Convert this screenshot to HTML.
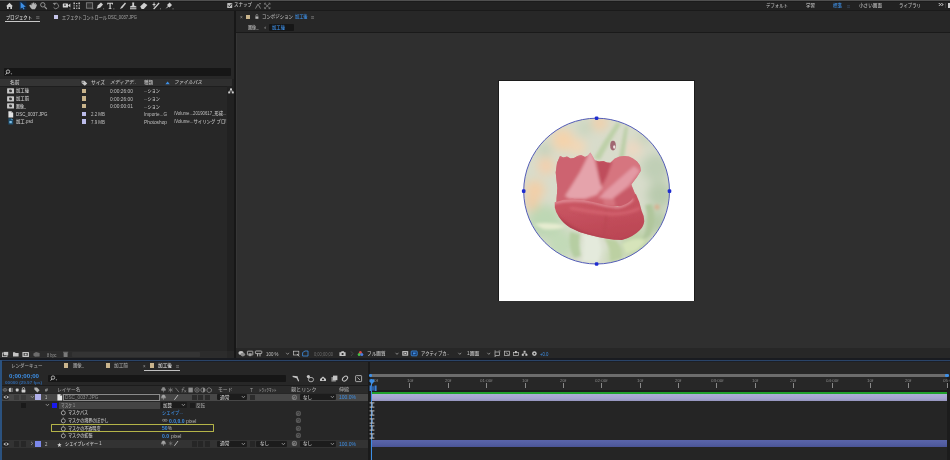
<!DOCTYPE html>
<html lang="ja">
<head>
<meta charset="utf-8">
<title>After Effects</title>
<style>
html,body{margin:0;padding:0;background:#262626;}
#app{position:relative;width:950px;height:460px;overflow:hidden;background:#262626;font-family:"Liberation Sans","Noto Sans CJK JP",sans-serif;}
#app div,#app svg,#app span{position:absolute;display:block;}
#app span{font-weight:500;white-space:nowrap;transform-origin:0 0;line-height:40px;height:40px;transform:scale(0.25);}
</style>
</head>
<body>
<div id="app">
<div style="left:0px;top:0px;width:950px;height:11px;background:#222222;"></div>
<div style="left:0px;top:0px;width:950px;height:1px;background:#505050;"></div>
<div style="left:0px;top:1px;width:950px;height:0.8px;background:#1c1c1c;"></div>
<div style="left:0px;top:10.4px;width:950px;height:1.1px;background:#1a1a1a;"></div>
<svg style="left:0px;top:0px;" width="240" height="11" viewBox="0 0 240 11">
<path d="M6 6.2 L9.5 2.8 L13 6.2 L12 6.2 L12 9 L10.3 9 L10.3 7 L8.7 7 L8.7 9 L7 9 L7 6.2 Z" fill="#cfcfcf"/>
<rect x="19" y="1.2" width="7.6" height="8.8" rx="0.8" fill="#15273d"/>
<path d="M20.6 2 L20.6 8.8 L22.3 7.4 L23.5 9.6 L24.6 9 L23.4 6.9 L25.8 6.7 Z" fill="#3d8fe6"/>
<path d="M29.2 5.4 L30.4 4.6 L31.4 5.6 L31.6 3.2 L32.5 2.8 L32.9 4.4 L33.2 2.4 L34.2 2.4 L34.4 4.4 L35 2.9 L35.9 3.2 L35.7 5 L36.5 4.2 L37 4.8 L36 7.6 L34.8 9.2 L32 9.2 L30.6 7.8 Z" fill="#b4b4b4"/>
<circle cx="42.8" cy="4.8" r="2.2" fill="none" stroke="#9c9c9c" stroke-width="0.9"/><path d="M44.5 6.6 L46.8 9" stroke="#9c9c9c" stroke-width="1.1"/>
<path d="M54.6 3.6 A2.7 2.7 0 1 1 53.6 7.4" fill="none" stroke="#8c8c8c" stroke-width="0.9"/><path d="M52.6 3 L55.6 2.8 L55 5.4 Z" fill="#8c8c8c"/>
<rect x="62.8" y="3.4" width="5.2" height="4.2" rx="0.6" fill="#d6d6d6"/><rect x="64" y="4.4" width="2" height="1.4" fill="#555"/><path d="M68 5.5 L70.4 3.6 L70.4 7.6 Z" fill="#d6d6d6"/><rect x="69.6" y="8.6" width="0.9" height="0.9" fill="#888"/>
<path d="M73.4 2.6 h1.6 v1.6 h-1.6 Z M78.4 2.6 h1.6 v1.6 h-1.6 Z M73.4 7.4 h1.6 v1.6 h-1.6 Z M78.4 7.4 h1.6 v1.6 h-1.6 Z M76 3 h1.4 v1 h-1.4 Z M76 7.8 h1.4 v1 h-1.4 Z M73.6 5.2 h1 v1.2 h-1 Z M78.8 5.2 h1 v1.2 h-1 Z M76 5.2 h1.4 v1.2 h-1.4 Z" fill="#b8b8b8"/>
<rect x="86.4" y="2.8" width="6.2" height="5.4" fill="#333" stroke="#7e7e7e" stroke-width="0.9"/><rect x="92.4" y="8.4" width="0.9" height="0.9" fill="#999"/>
<path d="M96.6 8.8 L98 5.2 L101 2.6 L103 4.4 L100.4 7.4 Z" fill="#cfcfcf"/><rect x="103.2" y="8.4" width="0.9" height="0.9" fill="#999"/>
<path d="M107.2 2.8 L113 2.8 L113 4.4 L112.2 4.4 L112 3.7 L110.7 3.7 L110.7 8.2 L111.6 8.4 L111.6 9 L108.6 9 L108.6 8.4 L109.5 8.2 L109.5 3.7 L108.2 3.7 L108 4.4 L107.2 4.4 Z" fill="#cfcfcf"/><rect x="113.4" y="8.4" width="0.9" height="0.9" fill="#999"/>
<path d="M120 9 L121 7 L125 2.6 L126 3.4 L122.4 8 Z" fill="#cfcfcf"/>
<path d="M132.2 2.6 L134.2 2.6 L134 5.4 L136.4 6.4 L136.4 7.6 L130 7.6 L130 6.4 L132.4 5.4 Z M130 8.2 L136.4 8.2 L136.4 9.2 L130 9.2 Z" fill="#cfcfcf"/>
<path d="M140.2 6.6 L144 2.8 L147.4 5 L143.8 9 L141.6 9 Z" fill="#cfcfcf"/>
<path d="M153 9 L158.6 2.6 L159.6 3.4 L154.4 9.2 Z M152.6 4 L155.4 4 L155.4 4.9 L152.6 4.9 Z M153.6 2.6 L154.5 2.6 L154.5 6.4 L153.6 6.4 Z" fill="#cfcfcf"/><rect x="160" y="8.4" width="0.9" height="0.9" fill="#999"/>
<path d="M165.4 8.8 L168 6 L167 5 L169.6 2.6 L172 5 L169.6 7.4 L168.8 6.8 Z" fill="#cfcfcf"/><rect x="172.6" y="8.4" width="0.9" height="0.9" fill="#999"/>
</svg>
<svg style="left:226px;top:2px;" width="50" height="9" viewBox="0 0 50 9">
<rect x="1.2" y="1" width="5" height="5" rx="0.6" fill="#bdbdbd"/><path d="M2.2 3.4 L3.4 4.8 L5.6 1.8" stroke="#222" stroke-width="0.9" fill="none"/>
<path d="M29.5 6.6 L32 2.2 L34.5 6.6" stroke="#9a9a9a" stroke-width="0.8" fill="none"/><rect x="33.4" y="1" width="1.2" height="1.2" fill="#9a9a9a"/>
<path d="M38.6 1.2 L40 1.2 M38.6 1.2 L38.6 2.6 M44 1.2 L42.6 1.2 M44 1.2 L44 2.6 M38.6 6.6 L40 6.6 M38.6 6.6 L38.6 5.2 M44 6.6 L42.6 6.6 M44 6.6 L44 5.2 M39.4 2 L43.2 5.8 M43.2 2 L39.4 5.8" stroke="#9a9a9a" stroke-width="0.7" fill="none"/>
</svg>
<span style="left:234px;top:-1.10px;font-size:20.0px;color:#c8c8c8;transform:scale(0.2250,0.25);">スナップ</span>
<span style="left:766px;top:-0.10px;font-size:20.0px;color:#b6b6b6;transform:scale(0.2200,0.25);">デフォルト</span>
<span style="left:806px;top:-0.10px;font-size:20.0px;color:#b6b6b6;transform:scale(0.2250,0.25);">学習</span>
<span style="left:833px;top:-0.10px;font-size:20.0px;color:#3d8fe6;transform:scale(0.2250,0.25);">標準</span>
<span style="left:847px;top:0.90px;font-size:20.0px;color:#3e5068;transform:scale(0.2999,0.25);">≡</span>
<span style="left:859px;top:-0.10px;font-size:20.0px;color:#b6b6b6;transform:scale(0.2300,0.25);">小さい画面</span>
<span style="left:899px;top:-0.10px;font-size:20.0px;color:#b6b6b6;transform:scale(0.2200,0.25);">ライブラリ</span>
<span style="left:937.5px;top:0.00px;font-size:28.0px;color:#c8c8c8;transform:scale(0.3852,0.25);">»</span>
<div style="left:948.2px;top:3.4px;width:1.8px;height:4.4px;background:#cfcfcf;"></div>
<div style="left:945.2px;top:3px;width:0.6px;height:5.0px;background:#3a3a3a;"></div>
<div style="left:0px;top:11.4px;width:234px;height:347.1px;background:#272727;"></div>
<div style="left:234px;top:11px;width:2.4px;height:347.5px;background:#171717;"></div>
<span style="left:6px;top:12.20px;font-size:20.0px;color:#dedede;transform:scale(0.2167,0.25);">プロジェクト</span>
<span style="left:35.5px;top:12.20px;font-size:20.0px;color:#8a8a8a;transform:scale(0.3427,0.25);">≡</span>
<div style="left:5px;top:20.7px;width:35px;height:1.1px;background:#c8c8c8;"></div>
<div style="left:54px;top:14.6px;width:4.2px;height:4.4px;background:#c4c4e8;"></div>
<span style="left:62px;top:12.20px;font-size:20.0px;color:#a8a8a8;transform:scale(0.2039,0.25);">エフェクトコントロール DSC_0037.JPG</span>
<div style="left:3.5px;top:68.4px;width:227.5px;height:7.2px;background:#161616;border-radius:1px;"></div>
<svg style="left:5px;top:69px;" width="9" height="6" viewBox="0 0 9 6"><circle cx="3" cy="2.6" r="1.7" fill="none" stroke="#d0d0d0" stroke-width="0.8"/><path d="M1.8 4 L0.6 5.6" stroke="#d0d0d0" stroke-width="0.9"/><path d="M5.6 4.4 L7.2 4.4 L6.4 5.4 Z" fill="#d0d0d0"/></svg>
<div style="left:227.4px;top:79px;width:6.8px;height:272px;background:#212121;"></div>
<div style="left:0px;top:79px;width:231.5px;height:7.2px;background:#2f2f2f;"></div>
<div style="left:0px;top:79px;width:80px;height:7.2px;background:#343434;"></div>
<div style="left:0px;top:86.2px;width:227px;height:0.6px;background:#1e1e1e;"></div>
<span style="left:10px;top:76.80px;font-size:20.0px;color:#c0c0c0;transform:scale(0.2375,0.25);">名前</span>
<svg style="left:81px;top:79.6px;" width="7" height="6" viewBox="0 0 7 6"><path d="M0.6 0.8 L3.4 0.8 L6.2 3.6 L3.8 5.8 L0.6 3 Z" fill="#c8c8c8"/><circle cx="2" cy="2.2" r="0.6" fill="#303030"/></svg>
<span style="left:91px;top:76.80px;font-size:20.0px;color:#c0c0c0;transform:scale(0.2357,0.25);">サイズ</span>
<span style="left:110px;top:76.80px;font-size:20.0px;color:#c0c0c0;transform:scale(0.2370,0.25);font-style:italic;">メディアデ..</span>
<span style="left:144px;top:76.80px;font-size:20.0px;color:#c0c0c0;transform:scale(0.2250,0.25);">種類</span>
<svg style="left:164.5px;top:80.8px;" width="6" height="4" viewBox="0 0 6 4"><path d="M0.4 3.2 L2.6 0.6 L4.8 3.2 Z" fill="#3d8fe6"/></svg>
<span style="left:174px;top:76.80px;font-size:20.0px;color:#c0c0c0;transform:scale(0.2333,0.25);font-style:italic;">ファイルパス</span>
<svg style="left:7px;top:87.8px;" width="8" height="6" viewBox="0 0 8 6"><rect x="0.1" y="0.3" width="6.9" height="5.2" rx="0.5" fill="#c8c8c8"/><path d="M2.2 1.8 L4 1.6 L5 2.6 L4.8 4 L2.8 4.2 L2 3 Z" fill="#3c3c3c"/></svg>
<span style="left:15.5px;top:84.80px;font-size:20.0px;color:#cccccc;transform:scale(0.2167,0.25);">加工後</span>
<div style="left:82.2px;top:88.5px;width:4.2px;height:4.4px;background:#c9b48c;"></div>
<span style="left:110px;top:85.80px;font-size:19.6px;color:#c0c0c0;transform:scale(0.2483,0.25);">0:00:26:00</span>
<span style="left:144px;top:84.80px;font-size:20.0px;color:#c0c0c0;transform:scale(0.2087,0.25);">...ション</span>
<svg style="left:7px;top:95.5px;" width="8" height="6" viewBox="0 0 8 6"><rect x="0.1" y="0.3" width="6.9" height="5.2" rx="0.5" fill="#c8c8c8"/><path d="M2.2 1.8 L4 1.6 L5 2.6 L4.8 4 L2.8 4.2 L2 3 Z" fill="#3c3c3c"/></svg>
<span style="left:15.5px;top:92.50px;font-size:20.0px;color:#cccccc;transform:scale(0.2167,0.25);">加工前</span>
<div style="left:82.2px;top:96.2px;width:4.2px;height:4.4px;background:#c9b48c;"></div>
<span style="left:110px;top:93.50px;font-size:19.6px;color:#c0c0c0;transform:scale(0.2483,0.25);">0:00:26:00</span>
<span style="left:144px;top:92.50px;font-size:20.0px;color:#c0c0c0;transform:scale(0.2087,0.25);">...ション</span>
<svg style="left:7px;top:103.2px;" width="8" height="6" viewBox="0 0 8 6"><rect x="0.1" y="0.3" width="6.9" height="5.2" rx="0.5" fill="#c8c8c8"/><path d="M2.2 1.8 L4 1.6 L5 2.6 L4.8 4 L2.8 4.2 L2 3 Z" fill="#3c3c3c"/></svg>
<span style="left:15.5px;top:101.20px;font-size:20.0px;color:#cccccc;transform:scale(0.1956,0.25);">画像_</span>
<div style="left:82.2px;top:103.9px;width:4.2px;height:4.4px;background:#c9b48c;"></div>
<span style="left:110px;top:101.20px;font-size:19.6px;color:#c0c0c0;transform:scale(0.2483,0.25);">0:00:00:01</span>
<span style="left:144px;top:101.20px;font-size:20.0px;color:#c0c0c0;transform:scale(0.2087,0.25);">...ション</span>
<svg style="left:7.6px;top:110.5px;" width="6" height="7" viewBox="0 0 6 7"><path d="M0.4 0.3 L3.4 0.3 L5.2 2.1 L5.2 6.4 L0.4 6.4 Z" fill="#e2e2e2"/><path d="M3.4 0.3 L3.4 2.1 L5.2 2.1 Z" fill="#9a9a9a"/></svg>
<span style="left:15.5px;top:108.80px;font-size:19.6px;color:#cccccc;transform:scale(0.2260,0.25);">DSC_0037.JPG</span>
<div style="left:82.2px;top:111.5px;width:4.2px;height:4.4px;background:#bcbcea;"></div>
<span style="left:91px;top:108.80px;font-size:19.6px;color:#c0c0c0;transform:scale(0.2255,0.25);">2.2 MB</span>
<span style="left:144px;top:108.80px;font-size:19.6px;color:#c0c0c0;transform:scale(0.2347,0.25);">Importe...G</span>
<span style="left:174px;top:107.80px;font-size:19.6px;color:#c0c0c0;transform:scale(0.2181,0.25);">/Volume...20190617_形成...</span>
<svg style="left:7.6px;top:118.2px;" width="6" height="7" viewBox="0 0 6 7"><path d="M0.4 0.3 L3.4 0.3 L5.2 2.1 L5.2 6.4 L0.4 6.4 Z" fill="#1f4f6e"/><path d="M3.4 0.3 L3.4 2.1 L5.2 2.1 Z" fill="#5a9cc4"/><rect x="1.4" y="3" width="2.4" height="2.2" fill="#7fc0e8"/></svg>
<span style="left:15.5px;top:115.50px;font-size:19.6px;color:#cccccc;transform:scale(0.2230,0.25);">加工.psd</span>
<div style="left:82.2px;top:119.2px;width:4.2px;height:4.4px;background:#bcbcea;"></div>
<span style="left:91px;top:116.50px;font-size:19.6px;color:#c0c0c0;transform:scale(0.2255,0.25);">7.9 MB</span>
<span style="left:144px;top:116.50px;font-size:19.6px;color:#c0c0c0;transform:scale(0.2455,0.25);">Photoshop</span>
<span style="left:174px;top:115.50px;font-size:19.6px;color:#c0c0c0;transform:scale(0.2232,0.25);">/Volume...サイリング プロ!</span>
<svg style="left:227.6px;top:87.6px;" width="6" height="6" viewBox="0 0 6 6"><rect x="2" y="0.4" width="2" height="1.8" fill="#d0d0d0"/><rect x="0.2" y="3.6" width="2" height="1.8" fill="#d0d0d0"/><rect x="3.8" y="3.6" width="2" height="1.8" fill="#d0d0d0"/><path d="M3 2 L3 3 M1.2 3.8 L1.2 3 L4.8 3 L4.8 3.8" stroke="#d0d0d0" stroke-width="0.6" fill="none"/></svg>
<div style="left:0px;top:351.2px;width:227px;height:6.6px;background:#2c2c2c;"></div>
<div style="left:72px;top:351.8px;width:128px;height:5.0px;background:#343434;border-radius:1px;"></div>
<svg style="left:0px;top:351px;" width="72" height="7" viewBox="0 0 72 7">
<rect x="2.4" y="2" width="4.6" height="3.6" fill="none" stroke="#c4c4c4" stroke-width="0.8"/><rect x="3.8" y="0.9" width="4.4" height="3.4" fill="#c4c4c4"/>
<path d="M13 1.2 L15 1.2 L15.6 2 L18.6 2 L18.6 5.6 L13 5.6 Z" fill="#c4c4c4"/>
<rect x="22.4" y="0.9" width="6.6" height="5" rx="0.5" fill="#c4c4c4"/><rect x="23.6" y="2" width="4.2" height="2.8" fill="#4a4a4a"/><circle cx="25.7" cy="3.4" r="1" fill="#c4c4c4"/>
<path d="M33.4 2.4 L36 1 L39.6 2 L39.6 5.4 L35 5.8 L33.4 4.6 Z" fill="#6c6c6c"/>
<rect x="63.6" y="1.6" width="4" height="4.4" rx="0.5" fill="#7a7a7a"/><rect x="63" y="0.8" width="5.2" height="0.8" fill="#7a7a7a"/>
</svg>
<span style="left:47px;top:349.60px;font-size:18.4px;color:#9a9a9a;transform:scale(0.2111,0.25);">8 bpc</span>
<div style="left:236.4px;top:11.4px;width:713.6px;height:347.1px;background:#272727;"></div>
<div style="left:236.4px;top:32.4px;width:713.6px;height:0.9px;background:#1a1a1a;"></div>
<div style="left:236.4px;top:33.2px;width:713.6px;height:315.2px;background:#2f2f2f;"></div>
<div style="left:236.4px;top:33.2px;width:1.1px;height:315.2px;background:#363636;"></div>
<span style="left:239.8px;top:12.00px;font-size:20.0px;color:#9a9a9a;transform:scale(0.2396,0.25);">×</span>
<div style="left:246px;top:14.6px;width:4.2px;height:4.4px;background:#c9b48c;"></div>
<svg style="left:254.8px;top:14.2px;" width="5" height="6" viewBox="0 0 5 6"><rect x="0.4" y="2.4" width="3" height="2.4" fill="#b4b4b4"/><path d="M0.9 2.4 L0.9 1.5 A1 1 0 0 1 2.9 1.5" fill="none" stroke="#b4b4b4" stroke-width="0.6"/></svg>
<span style="left:262px;top:11.00px;font-size:20.0px;color:#b4b4b4;transform:scale(0.2214,0.25);">コンポジション</span>
<span style="left:295px;top:11.00px;font-size:20.0px;color:#3d8fe6;transform:scale(0.2083,0.25);">加工後</span>
<span style="left:311px;top:12.00px;font-size:20.0px;color:#8a8a8a;transform:scale(0.2999,0.25);">≡</span>
<span style="left:248px;top:22.20px;font-size:20.0px;color:#b4b4b4;transform:scale(0.2054,0.25);">画像_</span>
<span style="left:263.6px;top:22.20px;font-size:24.0px;color:#9a9a9a;transform:scale(0.3000,0.25);">‹</span>
<div style="left:269px;top:23.8px;width:24.5px;height:6.8px;background:#161616;border-radius:1px;"></div>
<span style="left:272px;top:22.20px;font-size:20.0px;color:#3d8fe6;transform:scale(0.2167,0.25);">加工後</span>
<div style="left:497.8px;top:80.1px;width:197.4px;height:221.4px;background:#1c1c1c;"></div>
<div style="left:498.6px;top:80.9px;width:195.8px;height:219.8px;background:#ffffff;"></div>
<svg style="left:0;top:0;" width="950" height="460" viewBox="0 0 950 460">
<defs>
<clipPath id="mc"><circle cx="596.6" cy="191.1" r="72.9"/></clipPath>
<filter id="b8" x="-50%" y="-50%" width="200%" height="200%"><feGaussianBlur stdDeviation="5"/></filter>
<filter id="b3" x="-50%" y="-50%" width="200%" height="200%"><feGaussianBlur stdDeviation="1.6"/></filter>
<filter id="b1" x="-50%" y="-50%" width="200%" height="200%"><feGaussianBlur stdDeviation="0.7"/></filter>
<linearGradient id="gup" x1="0" y1="0" x2="0" y2="1"><stop offset="0" stop-color="#d77882"/><stop offset="1" stop-color="#cc5f6a"/></linearGradient>
<linearGradient id="gcup" x1="0" y1="0" x2="0.3" y2="1"><stop offset="0" stop-color="#cd5a66"/><stop offset="1" stop-color="#bc4755"/></linearGradient>
<clipPath id="cup1"><path d="M555.7 172.4 L557 163 L560 156 L563.5 157.5 L567 156.5 L570.5 158.5 L574 158 L577.5 156 L581 155 L585 157 L588 155.5 L590.4 152.4 L592.5 156 L594.8 160.2 L599 161.5 L603.5 161 L607 162.5 L610.4 162.8 L614.8 158.5 L619.5 156.5 L624.3 155.9 L629 156.5 L633 158.5 L637 161.5 L640 165.4 L640.9 170.7 L637 177 L631.3 184.6 L634.8 193.3 L636 200 L631 206 L556 206 L557.4 188 Z"/></clipPath><clipPath id="cup2"><path d="M554.8 202.2 Q563 199 572 198.7 Q583 199 593 202 Q606 205.5 617.4 206.5 Q626 205 631 200.4 L635.7 193.5 Q640 202 641.7 210.9 Q644.5 216 644.3 221.3 Q643.5 227 640 230 Q633 237 622 240 Q614 240 606 238.5 Q597 237 588 234.5 Q578 232 570 227.5 Q563 223 559 217 Q555.5 212 554.8 207.4 Z"/></clipPath>
<filter id="b2" x="-50%" y="-50%" width="200%" height="200%"><feGaussianBlur stdDeviation="1.5"/></filter>
</defs>
<g clip-path="url(#mc)">
<rect x="515" y="110" width="165" height="165" fill="#d8dccb"/>
<g filter="url(#b8)">
<circle cx="563" cy="140" r="11" fill="#f4d3ac"/>
<circle cx="578" cy="147" r="8" fill="#f3d7b6"/>
<circle cx="546" cy="166" r="9" fill="#f2d0ae"/>
<circle cx="535" cy="190" r="10" fill="#f2cfa8"/>
<circle cx="532" cy="204" r="7" fill="#f0cca4"/>
<circle cx="600" cy="123" r="8" fill="#f0d0ac"/>
<circle cx="585" cy="128" r="8" fill="#cbd6c0"/>
<circle cx="545" cy="150" r="7" fill="#c6d2bb"/>
<circle cx="633" cy="149" r="9" fill="#ecd8c2"/>
<circle cx="645" cy="138" r="8" fill="#cbd6c0"/>
<circle cx="656" cy="168" r="14" fill="#c0cfb6"/>
<circle cx="660" cy="195" r="13" fill="#b9cbae"/>
<circle cx="656" cy="222" r="12" fill="#b6cba8"/>
<circle cx="545" cy="222" r="17" fill="#bdd7b4"/>
<circle cx="562" cy="244" r="14" fill="#c2dab8"/>
<circle cx="592" cy="250" r="12" fill="#e2e9da"/>
<circle cx="636" cy="244" r="15" fill="#bdd2a8"/>
<circle cx="614" cy="256" r="9" fill="#c6d8b0"/>
</g>
<g filter="url(#b3)">
<path d="M594 158 Q604 140 617 122 L621 124 Q609 143 600 160 Z" fill="#bdd0a8"/>
<path d="M619 158 Q622 140 625 126 L628 127 Q626 142 624 158 Z" fill="#bccfa8"/>
<path d="M534 224 Q550 221 566 226 Q556 231 543 229 Z" fill="#e6ecd0"/>
<path d="M582 234 Q588 246 582 262 L598 262 Q602 246 598 236 Z" fill="#e4eadc"/>
<path d="M604 238 Q612 250 610 262 L622 258 Q622 246 616 240 Z" fill="#bcd0a2"/>
<path d="M622 244 Q634 236 646 240 Q640 252 626 254 Z" fill="#d6e4ba"/>
<path d="M645 205 Q651 222 642 240 L650 236 Q658 220 652 204 Z" fill="#b0c69c"/>
<path d="M570 232 Q568 248 574 258 L581 256 Q578 244 580 234 Z" fill="#b6cea2"/>
<circle cx="657" cy="207" r="2.6" fill="#d8b090"/>
</g>
<g filter="url(#b1)">
<ellipse cx="613" cy="145.6" rx="2.8" ry="4.8" fill="#a06872"/>
<ellipse cx="614.2" cy="147" rx="1.1" ry="1.8" fill="#f2e6e6"/>
<path d="M555.7 172.4 L557 163 L560 156 L563.5 157.5 L567 156.5 L570.5 158.5 L574 158 L577.5 156 L581 155 L585 157 L588 155.5 L590.4 152.4 L592.5 156 L594.8 160.2 L599 161.5 L603.5 161 L607 162.5 L610.4 162.8 L614.8 158.5 L619.5 156.5 L624.3 155.9 L629 156.5 L633 158.5 L637 161.5 L640 165.4 L640.9 170.7 L637 177 L631.3 184.6 L634.8 193.3 L636 200 L631 206 L556 206 L557.4 188 Z" fill="url(#gup)"/>
<g clip-path="url(#cup1)"><g filter="url(#b2)">
<path d="M554 156 L590 154 L586 166 L576 186 L566 200 L554 200 Z" fill="#cd636f"/>
<path d="M556 155 L589 153.5" fill="none" stroke="#dd8a94" stroke-width="2.2"/>
<path d="M590.4 150 L594.5 160 L597 170 L600 180 L602.5 188 L597 195 L585 199 L570 199 L565 196 L572 185 L580 172 L586 160 Z" fill="#e5a3ab"/>
<path d="M596 159 L613 162 L613 168 L605 180 L601 186 L598.5 176 Z" fill="#bf4e5c"/>
<path d="M613 160 L624 155 L640 160 L642 170 L636 178 L632 186 L636 196 L634 206 L604 206 L602 190 Z" fill="#d6747f"/>
<path d="M598 198 L610 187 L634 166 L640 171 L628 186 L612 199 Z" fill="#e39aa4"/>
<path d="M614 198 L631 186 L637 196 L633 205 L616 208 Z" fill="#c85a67"/>
</g></g>
<path d="M554.8 202.2 Q563 199 572 198.7 Q583 199 593 202 Q606 205.5 617.4 206.5 Q626 205 631 200.4 L635.7 193.5 Q640 202 641.7 210.9 Q644.5 216 644.3 221.3 Q643.5 227 640 230 Q633 237 622 240 Q614 240 606 238.5 Q597 237 588 234.5 Q578 232 570 227.5 Q563 223 559 217 Q555.5 212 554.8 207.4 Z" fill="url(#gcup)"/>
<g clip-path="url(#cup2)"><g filter="url(#b2)">
<path d="M552 203 Q572 198 593 202 Q606 206 617.4 207 Q626 206 633 199" fill="none" stroke="#e8a2aa" stroke-width="2.2"/>
<path d="M556 214 Q575 232 605 238 Q625 242 640 232 L646 240 L552 240 Z" fill="#b03e4d"/>
<path d="M603 238 Q607 222 606 209" fill="none" stroke="#b84452" stroke-width="1.4"/>
<path d="M570 208 Q590 212 612 214 Q628 214 640 208" fill="none" stroke="#d46470" stroke-width="3"/>
</g></g>
</g>
</g>
<circle cx="596.6" cy="191.1" r="72.9" fill="none" stroke="#535cb8" stroke-width="1"/>
<rect x="594.8000000000001" y="116.39999999999999" width="3.6" height="3.6" rx="1.2" fill="#1e2cd0"/>
<rect x="594.8000000000001" y="262.2" width="3.6" height="3.6" rx="1.2" fill="#1e2cd0"/>
<rect x="521.9000000000001" y="189.29999999999998" width="3.6" height="3.6" rx="1.2" fill="#1e2cd0"/>
<rect x="667.7" y="189.29999999999998" width="3.6" height="3.6" rx="1.2" fill="#1e2cd0"/>
</svg>
<svg style="left:236px;top:348.5px;" width="320" height="10" viewBox="0 0 320 10">
<ellipse cx="5" cy="4" rx="2.6" ry="2" fill="#c4c4c4"/><ellipse cx="6.8" cy="5.6" rx="2.4" ry="1.8" fill="#8a8a8a"/>
<rect x="11.4" y="2.2" width="5.4" height="3.8" rx="0.4" fill="none" stroke="#c4c4c4" stroke-width="0.8"/><rect x="12.6" y="4.4" width="3" height="1.2" fill="#c4c4c4"/><rect x="13" y="6.4" width="2.2" height="0.7" fill="#c4c4c4"/>
<rect x="19.4" y="2" width="6.4" height="2.6" rx="0.6" fill="none" stroke="#c4c4c4" stroke-width="0.8"/><path d="M21.6 4.6 L21.6 7.4 M24 4.6 L24 7.4" stroke="#c4c4c4" stroke-width="0.9"/>
<path d="M50.2 3.8 L51.6 5.4 L53 3.8" stroke="#9a9a9a" stroke-width="0.8" fill="none"/>
<rect x="57.4" y="2.2" width="5.4" height="3.8" fill="none" stroke="#c4c4c4" stroke-width="0.7"/><path d="M61 5 L63.2 7.4" stroke="#c4c4c4" stroke-width="0.9"/>
<path d="M66.6 7 L66.6 3.6 L69 2 L72 2 L72 7 Z" fill="none" stroke="#3d8fe6" stroke-width="0.8"/>
<path d="M103.4 3.2 L105 3.2 L105.6 2.2 L107.8 2.2 L108.4 3.2 L109.6 3.2 L109.6 7 L103.4 7 Z" fill="#c4c4c4"/><circle cx="106.6" cy="5" r="1.1" fill="#252525"/>
<path d="M115 2.4 L117 4.6 L115 7" stroke="#4a4a4a" stroke-width="0.9" fill="none"/>
<circle cx="124.4" cy="3.4" r="1.5" fill="#e04a4a"/><circle cx="123.2" cy="5.6" r="1.5" fill="#4ac04a"/><circle cx="125.8" cy="5.6" r="1.5" fill="#4a7ae0"/>
<path d="M159.6 3.8 L161 5.4 L162.4 3.8" stroke="#9a9a9a" stroke-width="0.8" fill="none"/>
<rect x="166.2" y="2" width="6" height="4.8" rx="0.5" fill="#b8b8b8"/><rect x="167.4" y="3.2" width="3.6" height="2.4" fill="#4a4a4a"/><rect x="168.4" y="3.8" width="1.8" height="1.2" fill="#d0d0d0"/>
<rect x="175.2" y="2" width="6" height="4.8" rx="0.8" fill="#17386a" stroke="#3d8fe6" stroke-width="0.8"/><path d="M177 3.4 L179.6 3.4 L179.6 5 L177 5.4 Z" fill="#3d8fe6"/>
<path d="M222.4 3.8 L223.8 5.4 L225.2 3.8" stroke="#9a9a9a" stroke-width="0.8" fill="none"/>
<path d="M251.4 3.8 L252.8 5.4 L254.2 3.8" stroke="#9a9a9a" stroke-width="0.8" fill="none"/>
<rect x="259" y="3" width="4.6" height="3.4" fill="none" stroke="#c4c4c4" stroke-width="0.7"/><path d="M258.4 2 L260 2 M262.6 2 L264.4 2 M258.4 7.4 L260 7.4" stroke="#c4c4c4" stroke-width="0.6"/>
<rect x="268.4" y="2.2" width="5" height="4.4" fill="none" stroke="#c4c4c4" stroke-width="0.7"/><path d="M270 3.4 L272.4 5.8" stroke="#c4c4c4" stroke-width="0.8"/>
<rect x="277.4" y="3.6" width="5" height="3" fill="none" stroke="#c4c4c4" stroke-width="0.7"/><rect x="279" y="2" width="1.8" height="2.2" fill="#c4c4c4"/>
<rect x="287.6" y="1.8" width="2" height="1.8" fill="#c4c4c4"/><rect x="285.8" y="5" width="2" height="1.8" fill="#c4c4c4"/><rect x="289.4" y="5" width="2" height="1.8" fill="#c4c4c4"/><path d="M288.6 3.4 L288.6 4.4 M286.8 5.2 L286.8 4.4 L290.4 4.4 L290.4 5.2" stroke="#c4c4c4" stroke-width="0.6" fill="none"/>
<circle cx="298.4" cy="4.6" r="2.3" fill="#c4c4c4"/><circle cx="298.4" cy="4.6" r="0.9" fill="#252525"/>
</svg>
<span style="left:266px;top:349.00px;font-size:19.2px;color:#c4c4c4;transform:scale(0.2298,0.25);">100 %</span>
<span style="left:314px;top:349.00px;font-size:19.2px;color:#6e6e6e;transform:scale(0.2095,0.25);">0;00;00;00</span>
<span style="left:367px;top:348.00px;font-size:20.0px;color:#c4c4c4;transform:scale(0.2313,0.25);">フル画質</span>
<span style="left:421px;top:348.00px;font-size:20.0px;color:#c4c4c4;transform:scale(0.2172,0.25);">アクティブカ..</span>
<span style="left:467px;top:348.00px;font-size:20.0px;color:#c4c4c4;transform:scale(0.2445,0.25);">1画面</span>
<span style="left:540px;top:349.00px;font-size:18.4px;color:#3d8fe6;transform:scale(0.2341,0.25);">+0.0</span>
<div style="left:0px;top:357.6px;width:950px;height:2.6px;background:#191b20;"></div>
<div style="left:0px;top:360px;width:950px;height:1.1px;background:#2a4468;"></div>
<div style="left:0px;top:361.1px;width:950px;height:0.8px;background:#1c1f26;"></div>
<div style="left:0px;top:361.8px;width:950px;height:98.2px;background:#272727;"></div>
<div style="left:0px;top:360px;width:2.2px;height:100px;background:#2b527f;"></div>
<span style="left:11px;top:359.60px;font-size:20.0px;color:#a6a6a6;transform:scale(0.2250,0.25);">レンダーキュー</span>
<div style="left:64px;top:363.3px;width:4.4px;height:4.4px;background:#c9b48c;"></div>
<span style="left:72.5px;top:359.60px;font-size:20.0px;color:#a6a6a6;transform:scale(0.2152,0.25);">画像_</span>
<div style="left:106px;top:363.3px;width:4.4px;height:4.4px;background:#c9b48c;"></div>
<span style="left:114px;top:359.60px;font-size:20.0px;color:#a6a6a6;transform:scale(0.2333,0.25);">加工前</span>
<span style="left:143.4px;top:360.60px;font-size:20.0px;color:#9a9a9a;transform:scale(0.2225,0.25);">×</span>
<div style="left:150px;top:363.3px;width:4.4px;height:4.4px;background:#c9b48c;"></div>
<span style="left:158px;top:359.60px;font-size:20.0px;color:#dedede;transform:scale(0.2333,0.25);">加工後</span>
<span style="left:176px;top:360.60px;font-size:20.0px;color:#8a8a8a;transform:scale(0.2999,0.25);">≡</span>
<div style="left:144px;top:369.6px;width:36px;height:1.1px;background:#c0c0c0;"></div>
<span style="left:9px;top:371.30px;font-size:24.0px;color:#3d8fe6;font-weight:700;transform:scale(0.2555,0.25);">0;00;00;00</span>
<span style="left:5px;top:377.20px;font-size:17.6px;color:#2f66a8;font-weight:700;transform:scale(0.2627,0.25);">00000 (29.97 fps)</span>
<div style="left:48px;top:374.6px;width:237.5px;height:7.2px;background:#161616;border-radius:1px;"></div>
<svg style="left:50px;top:375.2px;" width="9" height="6" viewBox="0 0 9 6"><circle cx="3" cy="2.6" r="1.7" fill="none" stroke="#d0d0d0" stroke-width="0.8"/><path d="M1.8 4 L0.6 5.6" stroke="#d0d0d0" stroke-width="0.9"/><path d="M5.6 4.4 L7.2 4.4 L6.4 5.4 Z" fill="#d0d0d0"/></svg>
<svg style="left:290px;top:373px;" width="76" height="11" viewBox="0 0 76 11">
<path d="M2.6 2.8 L7.6 3.2 L7.8 4.6 L9.2 8 L8.2 8.4 L6.6 5.2 L2.6 4 Z" fill="#c4c4c4"/>
<circle cx="18.4" cy="3.6" r="1.6" fill="#c4c4c4"/><ellipse cx="21" cy="6.6" rx="2.6" ry="2.2" fill="none" stroke="#c4c4c4" stroke-width="0.8"/>
<path d="M30 6 L33 3.4 L36 6 L36 8 L30 8 Z" fill="#c4c4c4"/><rect x="32" y="5.6" width="2" height="1.6" fill="#252525"/>
<rect x="41.4" y="4" width="4.4" height="4.6" fill="#8a8a8a"/><rect x="43" y="2.6" width="4.4" height="4.6" fill="#c4c4c4"/>
<ellipse cx="55" cy="5.6" rx="3" ry="1.9" transform="rotate(-40 55 5.6)" fill="none" stroke="#c4c4c4" stroke-width="1"/>
<rect x="65.6" y="2.6" width="6" height="6" rx="0.6" fill="none" stroke="#c4c4c4" stroke-width="0.8"/><path d="M67.4 4.4 L70 7" stroke="#c4c4c4" stroke-width="0.8"/>
</svg>
<div style="left:2.2px;top:385.6px;width:365.4px;height:7.9px;background:#2b2b2b;"></div>
<div style="left:2.2px;top:385px;width:365.4px;height:0.6px;background:#1c1c1c;"></div>
<svg style="left:2px;top:386px;" width="50" height="8" viewBox="0 0 50 8">
<ellipse cx="3" cy="3.9" rx="2" ry="1.3" fill="none" stroke="#8a8a8a" stroke-width="0.7"/><circle cx="3" cy="3.9" r="0.6" fill="#8a8a8a"/>
<circle cx="8.8" cy="3.9" r="2.2" fill="#cfcfcf"/><path d="M8.8 1.7 A2.2 2.2 0 0 1 8.8 6.1 Z" fill="#5a5a5a"/>
<rect x="13.8" y="2.6" width="2.8" height="2.8" rx="0.6" fill="#d0d0d0"/>
<rect x="19.6" y="3.4" width="3.8" height="3" rx="0.4" fill="#d0d0d0"/><path d="M20.4 3.4 L20.4 2.6 A1.1 1.1 0 0 1 22.6 2.6 L22.6 3.4" fill="none" stroke="#d0d0d0" stroke-width="0.8"/>
<path d="M32.4 1.6 L35 1.6 L37.6 4.2 L35.4 6.4 L32.4 3.6 Z" fill="#b4b4b4"/>
</svg>
<span style="left:44.6px;top:384.80px;font-size:19.6px;color:#b4b4b4;transform:scale(0.2567,0.25);">#</span>
<span style="left:57px;top:383.80px;font-size:20.0px;color:#9c9c9c;transform:scale(0.2364,0.25);">レイヤー名</span>
<svg style="left:160px;top:386px;" width="52" height="8" viewBox="0 0 52 8">
<path d="M2.6 1.6 L4.4 1.6 L5.6 4 L1.4 4 Z M1.4 4.6 L5.6 4.6 M3.5 4 L3.5 6.4" fill="#8e8e8e" stroke="#8e8e8e" stroke-width="0.6"/>
<path d="M10.6 1.6 L10.6 6.4 M8.4 2.8 L12.8 5.2 M12.8 2.8 L8.4 5.2" stroke="#8e8e8e" stroke-width="0.6"/>
<path d="M15.4 1.8 L19 6.2" stroke="#8e8e8e" stroke-width="0.7"/>
<path d="M22 6.4 L23 1.8 L24.6 1.8 M21.6 3.6 L24 3.6 M24.4 4.2 L26 6.4 M26 4.2 L24.4 6.4" stroke="#8e8e8e" stroke-width="0.6" fill="none"/>
<rect x="28.4" y="1.6" width="4.4" height="4.8" fill="#8e8e8e"/>
<circle cx="37" cy="4" r="2.2" fill="none" stroke="#8e8e8e" stroke-width="0.7"/><circle cx="37" cy="4" r="0.8" fill="#8e8e8e"/>
<circle cx="43" cy="4" r="2.2" fill="none" stroke="#8e8e8e" stroke-width="0.7"/><path d="M43 1.8 A2.2 2.2 0 0 1 43 6.2 Z" fill="#8e8e8e"/>
<path d="M47 3 L49 1.6 L51.4 3 L51.4 5.4 L49 6.6 L47 5.4 Z" fill="none" stroke="#8e8e8e" stroke-width="0.7"/>
</svg>
<span style="left:218px;top:383.80px;font-size:20.0px;color:#9c9c9c;transform:scale(0.2417,0.25);">モード</span>
<span style="left:250px;top:384.80px;font-size:19.6px;color:#9c9c9c;transform:scale(0.2507,0.25);">T</span>
<span style="left:259px;top:385.80px;font-size:16.0px;color:#a8a8a8;transform:scale(0.1562,0.25);">トラックマット</span>
<span style="left:291px;top:383.80px;font-size:20.0px;color:#9c9c9c;transform:scale(0.2550,0.25);">親とリンク</span>
<span style="left:339px;top:383.80px;font-size:20.0px;color:#9c9c9c;transform:scale(0.2500,0.25);">伸縮</span>
<div style="left:2.2px;top:393.8px;width:365.4px;height:7.2px;background:#474747;"></div>
<div style="left:2.4px;top:394.4px;width:7px;height:6px;background:#2a2a2a;border-radius:2px;"></div>
<svg style="left:2.8px;top:394.3px;" width="7" height="6" viewBox="0 0 7 6"><path d="M0.4 3 Q3.2 0 6 3 Q3.2 6 0.4 3 Z" fill="#c4c4c4"/><circle cx="3.2" cy="3" r="1" fill="#252525"/></svg>
<div style="left:14px;top:394.5px;width:5px;height:5.6px;background:#3b3b3b;"></div>
<div style="left:20.6px;top:394.5px;width:5px;height:5.6px;background:#3b3b3b;"></div>
<svg style="left:29.6px;top:395.3px;" width="5" height="4" viewBox="0 0 5 4"><path d="M0.8 1 L2.4 2.8 L4 1" stroke="#9a9a9a" stroke-width="0.8" fill="none"/></svg>
<div style="left:35px;top:394.3px;width:6.2px;height:6px;background:#b0b0ea;"></div>
<span style="left:44.6px;top:392.30px;font-size:19.6px;color:#c4c4c4;transform:scale(0.2017,0.25);">1</span>
<svg style="left:56.6px;top:393.90000000000003px;" width="6" height="7" viewBox="0 0 6 7"><path d="M0.4 0.3 L3.2 0.3 L5 2.1 L5 6.4 L0.4 6.4 Z" fill="#e6e6e6"/><path d="M3.2 0.3 L3.2 2.1 L5 2.1 Z" fill="#8a8a8a"/></svg>
<div style="left:63px;top:394px;width:96.6px;height:6.8px;background:#2c2c2c;box-sizing:border-box;border:0.7px solid #8c8c8c;"></div>
<span style="left:65px;top:392.30px;font-size:19.6px;color:#8e8e8e;transform:scale(0.2403,0.25);">DSC_0037.JPG</span>
<svg style="left:160px;top:393.90000000000003px;" width="20" height="7" viewBox="0 0 20 7"><path d="M2.6 1 L4.4 1 L5.6 3.4 L1.4 3.4 Z M1.4 4 L5.6 4 M3.5 3.4 L3.5 5.8" fill="#a4a4a4" stroke="#a4a4a4" stroke-width="0.6"/><path d="M14.4 5.8 L18 1" stroke="#d4d4d4" stroke-width="0.8"/></svg>
<div style="left:192px;top:394.7px;width:5.0px;height:5.4px;background:#2c2c2c;"></div>
<div style="left:198.4px;top:394.7px;width:5.0px;height:5.4px;background:#2c2c2c;"></div>
<div style="left:204.8px;top:394.7px;width:5.0px;height:5.4px;background:#2c2c2c;"></div>
<div style="left:217px;top:394.1px;width:30px;height:6.4px;background:#1c1c1c;border-radius:1px;"></div>
<span style="left:219.5px;top:392.30px;font-size:20.0px;color:#c4c4c4;transform:scale(0.2375,0.25);">通常</span>
<svg style="left:241px;top:395.3px;" width="5" height="4" viewBox="0 0 5 4"><path d="M0.8 1 L2.4 2.8 L4 1" stroke="#9a9a9a" stroke-width="0.8" fill="none"/></svg>
<div style="left:250px;top:394.7px;width:5.0px;height:5.4px;background:#2c2c2c;"></div>
<div style="left:256.4px;top:394.1px;width:31px;height:6.4px;background:#474747;border-radius:1px;"></div>
<svg style="left:290.6px;top:393.90000000000003px;" width="7" height="7" viewBox="0 0 7 7"><circle cx="3.4" cy="3.4" r="2.6" fill="#7a7a7a"/><path d="M3.4 3.4 m-1.2 0 a1.2 1.2 0 1 1 1.2 1.2" fill="none" stroke="#2a2a2a" stroke-width="0.6"/></svg>
<div style="left:299.6px;top:394.1px;width:36px;height:6.4px;background:#1c1c1c;border-radius:1px;"></div>
<span style="left:302.5px;top:392.30px;font-size:20.0px;color:#c4c4c4;transform:scale(0.2250,0.25);">なし</span>
<svg style="left:329.6px;top:395.3px;" width="5" height="4" viewBox="0 0 5 4"><path d="M0.8 1 L2.4 2.8 L4 1" stroke="#9a9a9a" stroke-width="0.8" fill="none"/></svg>
<span style="left:339px;top:392.30px;font-size:19.6px;color:#3d8fe6;transform:scale(0.2558,0.25);">100.0%</span>
<div style="left:21px;top:402.5px;width:5.0px;height:5.6px;background:#1a1a1a;"></div>
<svg style="left:45px;top:403.3px;" width="5" height="4" viewBox="0 0 5 4"><path d="M0.8 1 L2.4 2.8 L4 1" stroke="#9a9a9a" stroke-width="0.8" fill="none"/></svg>
<div style="left:59px;top:401.6px;width:101px;height:7.2px;background:#444444;"></div>
<div style="left:52px;top:402.5px;width:5.0px;height:5.6px;background:#1a1aee;"></div>
<span style="left:61px;top:400.30px;font-size:20.0px;color:#9e9e9e;transform:scale(0.1826,0.25);">マスク 1</span>
<div style="left:161px;top:402.2px;width:25.5px;height:6.2px;background:#1c1c1c;border-radius:1px;"></div>
<span style="left:163px;top:400.30px;font-size:20.0px;color:#c4c4c4;transform:scale(0.2250,0.25);">加算</span>
<svg style="left:180.5px;top:403.3px;" width="5" height="4" viewBox="0 0 5 4"><path d="M0.8 1 L2.4 2.8 L4 1" stroke="#9a9a9a" stroke-width="0.8" fill="none"/></svg>
<div style="left:190px;top:402.90000000000003px;width:4.6px;height:4.8px;background:#1c1c1c;"></div>
<span style="left:196px;top:400.30px;font-size:20.0px;color:#9a9a9a;transform:scale(0.2250,0.25);">反転</span>
<svg style="left:59.6px;top:409.4px;" width="7" height="7" viewBox="0 0 7 7"><circle cx="3.3" cy="3.9" r="2" fill="#1e1e1e" stroke="#acacac" stroke-width="0.9"/><rect x="2.7" y="0.7" width="1.2" height="0.9" fill="#acacac"/></svg>
<span style="left:68px;top:407.00px;font-size:20.0px;color:#c2c2c2;transform:scale(0.2020,0.25);">マスクパス</span>
<svg style="left:294.8px;top:409.6px;" width="7" height="7" viewBox="0 0 7 7"><circle cx="3.4" cy="3.4" r="2.6" fill="#585858"/><path d="M3.4 3.4 m-1.2 0 a1.2 1.2 0 1 1 1.2 1.2" fill="none" stroke="#2a2a2a" stroke-width="0.6"/></svg>
<svg style="left:59.6px;top:416.9px;" width="7" height="7" viewBox="0 0 7 7"><circle cx="3.3" cy="3.9" r="2" fill="#1e1e1e" stroke="#acacac" stroke-width="0.9"/><rect x="2.7" y="0.7" width="1.2" height="0.9" fill="#acacac"/></svg>
<span style="left:68px;top:414.50px;font-size:20.0px;color:#c2c2c2;transform:scale(0.2025,0.25);">マスクの境界のぼかし</span>
<svg style="left:294.8px;top:417.1px;" width="7" height="7" viewBox="0 0 7 7"><circle cx="3.4" cy="3.4" r="2.6" fill="#585858"/><path d="M3.4 3.4 m-1.2 0 a1.2 1.2 0 1 1 1.2 1.2" fill="none" stroke="#2a2a2a" stroke-width="0.6"/></svg>
<svg style="left:59.6px;top:424.5px;" width="7" height="7" viewBox="0 0 7 7"><circle cx="3.3" cy="3.9" r="2" fill="#1e1e1e" stroke="#acacac" stroke-width="0.9"/><rect x="2.7" y="0.7" width="1.2" height="0.9" fill="#acacac"/></svg>
<span style="left:68px;top:423.10px;font-size:20.0px;color:#c2c2c2;transform:scale(0.2031,0.25);">マスクの不透明度</span>
<svg style="left:294.8px;top:424.70000000000005px;" width="7" height="7" viewBox="0 0 7 7"><circle cx="3.4" cy="3.4" r="2.6" fill="#585858"/><path d="M3.4 3.4 m-1.2 0 a1.2 1.2 0 1 1 1.2 1.2" fill="none" stroke="#2a2a2a" stroke-width="0.6"/></svg>
<svg style="left:59.6px;top:432.2px;" width="7" height="7" viewBox="0 0 7 7"><circle cx="3.3" cy="3.9" r="2" fill="#1e1e1e" stroke="#acacac" stroke-width="0.9"/><rect x="2.7" y="0.7" width="1.2" height="0.9" fill="#acacac"/></svg>
<span style="left:68px;top:429.80px;font-size:20.0px;color:#c2c2c2;transform:scale(0.2042,0.25);">マスクの拡張</span>
<svg style="left:294.8px;top:432.40000000000003px;" width="7" height="7" viewBox="0 0 7 7"><circle cx="3.4" cy="3.4" r="2.6" fill="#585858"/><path d="M3.4 3.4 m-1.2 0 a1.2 1.2 0 1 1 1.2 1.2" fill="none" stroke="#2a2a2a" stroke-width="0.6"/></svg>
<span style="left:162px;top:407.00px;font-size:20.0px;color:#3d8fe6;transform:scale(0.2172,0.25);">シェイプ...</span>
<svg style="left:161.6px;top:417.5px;" width="7" height="5" viewBox="0 0 7 5"><rect x="0.4" y="1.4" width="2.6" height="1.8" rx="0.8" fill="none" stroke="#a0a0a0" stroke-width="0.6"/><rect x="2.6" y="1.4" width="2.6" height="1.8" rx="0.8" fill="none" stroke="#a0a0a0" stroke-width="0.6"/></svg>
<span style="left:169px;top:415.50px;font-size:19.6px;color:#3d8fe6;font-weight:700;transform:scale(0.2587,0.25);">0.0,0.0</span>
<span style="left:186px;top:415.50px;font-size:19.6px;color:#b4b4b4;transform:scale(0.2605,0.25);">pixel</span>
<span style="left:162px;top:423.10px;font-size:19.6px;color:#3d8fe6;font-weight:700;transform:scale(0.2569,0.25);">50</span>
<span style="left:167.6px;top:423.10px;font-size:19.6px;color:#c4c4c4;transform:scale(0.2237,0.25);">%</span>
<span style="left:162px;top:430.80px;font-size:19.6px;color:#3d8fe6;font-weight:700;transform:scale(0.2569,0.25);">0.0</span>
<span style="left:171px;top:430.80px;font-size:19.6px;color:#b4b4b4;transform:scale(0.2605,0.25);">pixel</span>
<div style="left:51px;top:423.8px;width:163px;height:8.6px;background:transparent;box-sizing:border-box;border:1px solid #b4b448;border-radius:0.6px;"></div>
<div style="left:2.2px;top:439.8px;width:365.4px;height:7.9px;background:#333333;"></div>
<div style="left:2.4px;top:440.8px;width:7px;height:6px;background:#222222;border-radius:2px;"></div>
<svg style="left:2.8px;top:440.8px;" width="7" height="6" viewBox="0 0 7 6"><path d="M0.4 3 Q3.2 0 6 3 Q3.2 6 0.4 3 Z" fill="#c4c4c4"/><circle cx="3.2" cy="3" r="1" fill="#252525"/></svg>
<div style="left:14px;top:441.0px;width:5px;height:5.6px;background:#272727;"></div>
<div style="left:20.6px;top:441.0px;width:5px;height:5.6px;background:#272727;"></div>
<svg style="left:29.8px;top:441.40000000000003px;" width="4" height="5" viewBox="0 0 4 5"><path d="M1 0.8 L2.8 2.4 L1 4" stroke="#9a9a9a" stroke-width="0.8" fill="none"/></svg>
<div style="left:35px;top:440.8px;width:6.2px;height:6px;background:#7c88ea;"></div>
<span style="left:44.6px;top:438.80px;font-size:19.6px;color:#c4c4c4;transform:scale(0.2201,0.25);">2</span>
<span style="left:56.6px;top:438.60px;font-size:19.6px;color:#d8d8d8;transform:scale(0.2450,0.25);">★</span>
<span style="left:65px;top:437.80px;font-size:20.0px;color:#cccccc;transform:scale(0.2073,0.25);">シェイプレイヤー 1</span>
<svg style="left:160px;top:440.40000000000003px;" width="20" height="7" viewBox="0 0 20 7"><path d="M2.6 1 L4.4 1 L5.6 3.4 L1.4 3.4 Z M1.4 4 L5.6 4 M3.5 3.4 L3.5 5.8" fill="#a4a4a4" stroke="#a4a4a4" stroke-width="0.6"/><path d="M14.4 5.8 L18 1" stroke="#d4d4d4" stroke-width="0.8"/><path d="M10.6 1.4 L10.6 5.4 M8.8 2.4 L12.4 4.4 M12.4 2.4 L8.8 4.4" stroke="#7a7a7a" stroke-width="0.6"/></svg>
<div style="left:192px;top:441.2px;width:5.0px;height:5.4px;background:#262626;"></div>
<div style="left:198.4px;top:441.2px;width:5.0px;height:5.4px;background:#262626;"></div>
<div style="left:204.8px;top:441.2px;width:5.0px;height:5.4px;background:#262626;"></div>
<div style="left:217px;top:440.6px;width:30px;height:6.4px;background:#1c1c1c;border-radius:1px;"></div>
<span style="left:219.5px;top:437.80px;font-size:20.0px;color:#c4c4c4;transform:scale(0.2375,0.25);">通常</span>
<svg style="left:241px;top:441.8px;" width="5" height="4" viewBox="0 0 5 4"><path d="M0.8 1 L2.4 2.8 L4 1" stroke="#9a9a9a" stroke-width="0.8" fill="none"/></svg>
<div style="left:250px;top:441.2px;width:5.0px;height:5.4px;background:#262626;"></div>
<div style="left:256.4px;top:440.6px;width:31px;height:6.4px;background:#1c1c1c;border-radius:1px;"></div>
<span style="left:259.5px;top:437.80px;font-size:20.0px;color:#c4c4c4;transform:scale(0.2250,0.25);">なし</span>
<svg style="left:281.4px;top:441.8px;" width="5" height="4" viewBox="0 0 5 4"><path d="M0.8 1 L2.4 2.8 L4 1" stroke="#9a9a9a" stroke-width="0.8" fill="none"/></svg>
<svg style="left:290.6px;top:440.40000000000003px;" width="7" height="7" viewBox="0 0 7 7"><circle cx="3.4" cy="3.4" r="2.6" fill="#7a7a7a"/><path d="M3.4 3.4 m-1.2 0 a1.2 1.2 0 1 1 1.2 1.2" fill="none" stroke="#2a2a2a" stroke-width="0.6"/></svg>
<div style="left:299.6px;top:440.6px;width:36px;height:6.4px;background:#1c1c1c;border-radius:1px;"></div>
<span style="left:302.5px;top:437.80px;font-size:20.0px;color:#c4c4c4;transform:scale(0.2250,0.25);">なし</span>
<svg style="left:329.6px;top:441.8px;" width="5" height="4" viewBox="0 0 5 4"><path d="M0.8 1 L2.4 2.8 L4 1" stroke="#9a9a9a" stroke-width="0.8" fill="none"/></svg>
<span style="left:339px;top:438.80px;font-size:19.6px;color:#3d8fe6;transform:scale(0.2558,0.25);">100.0%</span>
<div style="left:367.6px;top:361.8px;width:2px;height:98.2px;background:#1a1a1a;"></div>
<div style="left:369.6px;top:361.8px;width:580.4px;height:98.2px;background:#252525;"></div>
<div style="left:369.6px;top:361.8px;width:580.4px;height:29.8px;background:#272727;"></div>
<div style="left:369.6px;top:374.1px;width:577.2px;height:3.1px;background:#6c6c6c;"></div>
<div style="left:368.8px;top:373.8px;width:3.2px;height:3.7px;background:#3d8fe6;border-radius:1.2px;"></div>
<div style="left:945.4px;top:373.8px;width:3.2px;height:3.7px;background:#3d8fe6;border-radius:1.2px;"></div>
<div style="left:946.8px;top:377.4px;width:3.2px;height:83px;background:#1c1c1c;"></div>
<span style="left:374px;top:375.30px;font-size:17.6px;color:#8a8a8a;transform:scale(0.2723,0.25);">0f</span>
<span style="left:406.67px;top:375.30px;font-size:17.6px;color:#8a8a8a;transform:scale(0.2616,0.25);">10f</span>
<div style="left:409.47px;top:382.8px;width:0.9px;height:5.6px;background:#8a8a8a;"></div>
<span style="left:445.04px;top:375.30px;font-size:17.6px;color:#8a8a8a;transform:scale(0.2616,0.25);">20f</span>
<div style="left:447.84000000000003px;top:382.8px;width:0.9px;height:5.6px;background:#8a8a8a;"></div>
<span style="left:480.36px;top:375.30px;font-size:17.6px;color:#8a8a8a;transform:scale(0.2555,0.25);">01:00f</span>
<div style="left:486.21000000000004px;top:382.8px;width:0.9px;height:5.6px;background:#8a8a8a;"></div>
<span style="left:521.78px;top:375.30px;font-size:17.6px;color:#8a8a8a;transform:scale(0.2616,0.25);">10f</span>
<div style="left:524.58px;top:382.8px;width:0.9px;height:5.6px;background:#8a8a8a;"></div>
<span style="left:560.15px;top:375.30px;font-size:17.6px;color:#8a8a8a;transform:scale(0.2616,0.25);">20f</span>
<div style="left:562.95px;top:382.8px;width:0.9px;height:5.6px;background:#8a8a8a;"></div>
<span style="left:595.47px;top:375.30px;font-size:17.6px;color:#8a8a8a;transform:scale(0.2555,0.25);">02:00f</span>
<div style="left:601.32px;top:382.8px;width:0.9px;height:5.6px;background:#8a8a8a;"></div>
<span style="left:636.8899999999999px;top:375.30px;font-size:17.6px;color:#8a8a8a;transform:scale(0.2616,0.25);">10f</span>
<div style="left:639.6899999999999px;top:382.8px;width:0.9px;height:5.6px;background:#8a8a8a;"></div>
<span style="left:675.26px;top:375.30px;font-size:17.6px;color:#8a8a8a;transform:scale(0.2616,0.25);">20f</span>
<div style="left:678.0600000000001px;top:382.8px;width:0.9px;height:5.6px;background:#8a8a8a;"></div>
<span style="left:710.5799999999999px;top:375.30px;font-size:17.6px;color:#8a8a8a;transform:scale(0.2555,0.25);">03:00f</span>
<div style="left:716.43px;top:382.8px;width:0.9px;height:5.6px;background:#8a8a8a;"></div>
<span style="left:752.0px;top:375.30px;font-size:17.6px;color:#8a8a8a;transform:scale(0.2616,0.25);">10f</span>
<div style="left:754.8000000000001px;top:382.8px;width:0.9px;height:5.6px;background:#8a8a8a;"></div>
<span style="left:790.3699999999999px;top:375.30px;font-size:17.6px;color:#8a8a8a;transform:scale(0.2616,0.25);">20f</span>
<div style="left:793.17px;top:382.8px;width:0.9px;height:5.6px;background:#8a8a8a;"></div>
<span style="left:825.6899999999999px;top:375.30px;font-size:17.6px;color:#8a8a8a;transform:scale(0.2555,0.25);">04:00f</span>
<div style="left:831.54px;top:382.8px;width:0.9px;height:5.6px;background:#8a8a8a;"></div>
<span style="left:867.1099999999999px;top:375.30px;font-size:17.6px;color:#8a8a8a;transform:scale(0.2616,0.25);">10f</span>
<div style="left:869.91px;top:382.8px;width:0.9px;height:5.6px;background:#8a8a8a;"></div>
<span style="left:905.4799999999999px;top:375.30px;font-size:17.6px;color:#8a8a8a;transform:scale(0.2616,0.25);">20f</span>
<div style="left:908.28px;top:382.8px;width:0.9px;height:5.6px;background:#8a8a8a;"></div>
<span style="left:942.55px;top:375.30px;font-size:17.6px;color:#8a8a8a;transform:scale(0.2628,0.25);">05:0</span>
<div style="left:946.65px;top:382.8px;width:0.9px;height:5.6px;background:#8a8a8a;"></div>
<div style="left:369.6px;top:390.2px;width:577.2px;height:1.4px;background:#1c1c1c;"></div>
<div style="left:371.2px;top:391.6px;width:575.4px;height:2.1px;background:#1fa02c;"></div>
<div style="left:371.2px;top:394.1px;width:575.4px;height:6.6px;background:linear-gradient(#aeaed8,#a4a4ce 60%,#9696c0);"></div>
<div style="left:371.2px;top:440.4px;width:575.4px;height:6.6px;background:linear-gradient(#5a65aa,#525da0 60%,#4a5496);"></div>
<div style="left:371.4px;top:379px;width:0.9px;height:81px;background:#3d8fe6;"></div>
<svg style="left:368.9px;top:379.4px;" width="6" height="6" viewBox="0 0 6 6"><path d="M0.5 0.8 Q0.5 0.3 1 0.3 L4.8 0.3 Q5.3 0.3 5.3 0.8 L5.3 2.6 L2.9 5.2 L0.5 2.6 Z" fill="#3d8fe6"/></svg>
<svg style="left:368.8px;top:385.4px;" width="9" height="7" viewBox="0 0 9 7"><path d="M0.6 0.6 L2.6 0.6 L2.6 6 L0.6 6 Z M5.6 0.6 L7.6 0.6 L7.6 6 L5.6 6 Z" fill="#3d82d8"/><rect x="2.6" y="1.2" width="3" height="4.4" fill="#2c5c9c"/></svg>
<svg style="left:369px;top:402.3px;" width="6" height="6" viewBox="0 0 6 6"><path d="M0.6 0.9 L5.4 0.9 M3 0.9 L3 5.1 M0.6 5.1 L5.4 5.1" stroke="#c4c4c4" stroke-width="1" fill="none"/><path d="M3 1.4 L3 4.6" stroke="#5a9ae0" stroke-width="0.7"/></svg>
<svg style="left:369px;top:410px;" width="6" height="6" viewBox="0 0 6 6"><path d="M0.6 0.9 L5.4 0.9 M3 0.9 L3 5.1 M0.6 5.1 L5.4 5.1" stroke="#c4c4c4" stroke-width="1" fill="none"/><path d="M3 1.4 L3 4.6" stroke="#5a9ae0" stroke-width="0.7"/></svg>
<svg style="left:369px;top:417.5px;" width="6" height="6" viewBox="0 0 6 6"><path d="M0.6 0.9 L5.4 0.9 M3 0.9 L3 5.1 M0.6 5.1 L5.4 5.1" stroke="#c4c4c4" stroke-width="1" fill="none"/><path d="M3 1.4 L3 4.6" stroke="#5a9ae0" stroke-width="0.7"/></svg>
<svg style="left:369px;top:425.1px;" width="6" height="6" viewBox="0 0 6 6"><path d="M0.6 0.9 L5.4 0.9 M3 0.9 L3 5.1 M0.6 5.1 L5.4 5.1" stroke="#c4c4c4" stroke-width="1" fill="none"/><path d="M3 1.4 L3 4.6" stroke="#5a9ae0" stroke-width="0.7"/></svg>
<svg style="left:369px;top:432.8px;" width="6" height="6" viewBox="0 0 6 6"><path d="M0.6 0.9 L5.4 0.9 M3 0.9 L3 5.1 M0.6 5.1 L5.4 5.1" stroke="#c4c4c4" stroke-width="1" fill="none"/><path d="M3 1.4 L3 4.6" stroke="#5a9ae0" stroke-width="0.7"/></svg>
</div>
</body>
</html>
